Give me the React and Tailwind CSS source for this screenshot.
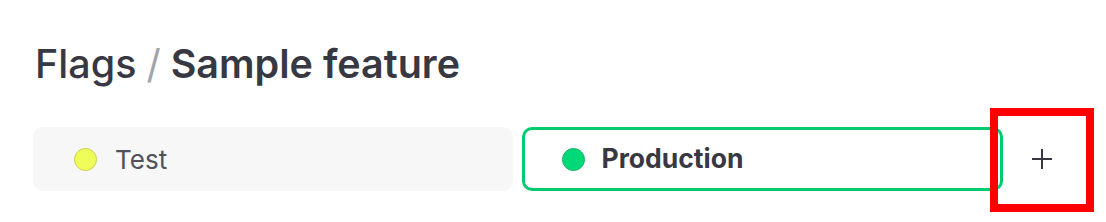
import React from 'react';

const font = { fontFamily: 'Inter, "Noto Sans", sans-serif' };

const App = () => {
  return (
    <div className="relative w-[1106px] h-[222px] bg-white overflow-hidden" style={font}>
      {/* Header */}
      <div className="pl-[35px] pr-[25px] pt-[41px]">
        <h1 className="text-[39.5px] leading-[46px] text-[#383843]">
          <span className="font-medium">Flags</span>
          <span className="text-[#a3a3ab] font-normal mx-[10px]">/</span>
          <span className="font-semibold">Sample feature</span>
        </h1>
      </div>

      {/* Environments */}
      <div className="flex items-center pl-[33px] pr-[25px] mt-[40px]">
        <div className="flex flex-1 gap-[9px]">
          <div className="flex-1 h-[64px] rounded-[10px] bg-[#f7f7f7] flex items-center pl-[41px] gap-[18px]">
            <span className="w-[23px] h-[23px] rounded-full bg-[#effd5a] border-[1.5px] border-[#cbd04c]" />
            <span className="text-[26px] text-[#51515b]">Test</span>
          </div>
          <div className="flex-1 h-[64px] rounded-[10px] border-[3px] border-[#00cc6f] flex items-center pl-[37px] gap-[17px]">
            <span className="w-[23px] h-[23px] rounded-full bg-[#00d978] border-[1.5px] border-[#0fb266]" />
            <span className="text-[26.5px] font-bold text-[#383843]">Production</span>
          </div>
        </div>
        <button className="w-[78px] h-[64px] flex items-center justify-center text-[#383843]">
          <svg width="22" height="22" viewBox="0 0 22 22" fill="none">
            <path d="M11 1v20M1 11h20" stroke="currentColor" strokeWidth="2" />
          </svg>
        </button>
      </div>

      {/* Highlight annotation */}
      <div className="absolute left-[990px] top-[108px] w-[104px] h-[104px] border-[8px] border-[#ff0000] pointer-events-none" />
    </div>
  );
};

export default App;
